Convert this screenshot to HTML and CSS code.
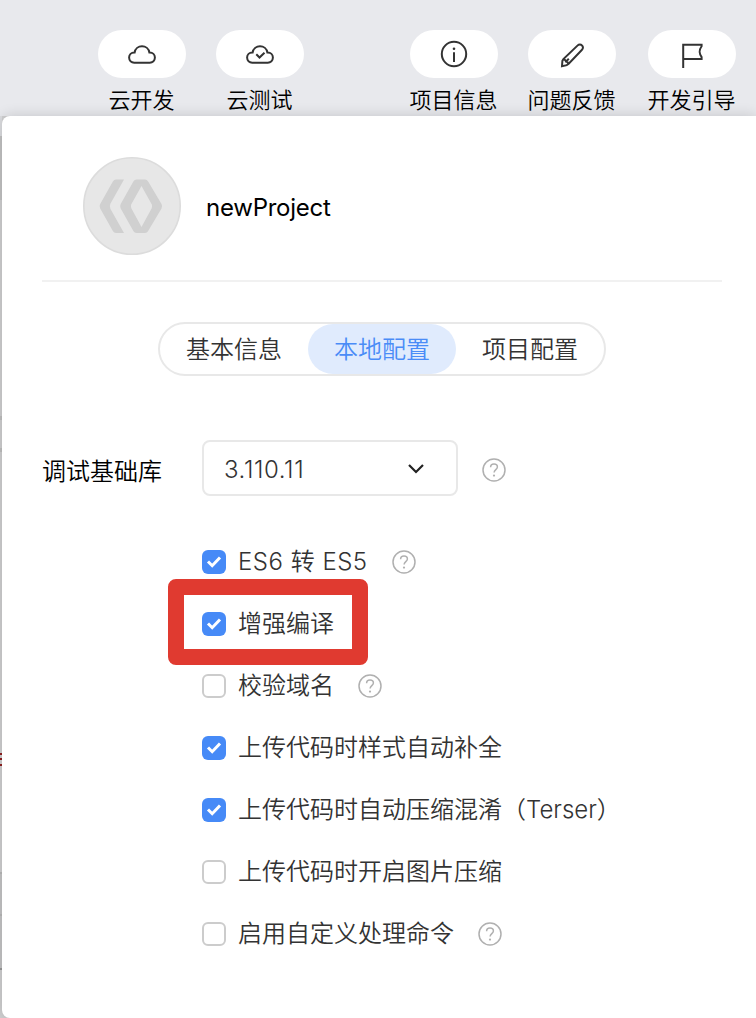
FILE: index.html
```html
<!DOCTYPE html>
<html lang="zh-CN">
<head>
<meta charset="utf-8">
<title>newProject</title>
<link rel="stylesheet" href="styles.css">
</head>
<body>
<svg class="defs" width="0" height="0">
  <symbol id="help" viewBox="0 0 24 24"><circle cx="12" cy="12" r="11" fill="none" stroke="#b0b0b0" stroke-width="1.5"/><path d="M8.600 9.200C8.600 7.200 10 6 12 6s3.400 1.200 3.400 3c0 2.600-3.300 2.800-3.300 5.600" fill="none" stroke="#b0b0b0" stroke-width="1.500"/><circle cx="12" cy="17.600" r="1.100" fill="#b0b0b0"/></symbol>
  <symbol id="tick" viewBox="0 0 24 24"><path d="M6 11.500l4.200 4.200L18 7.500" fill="none" stroke="#fff" stroke-width="3"/></symbol>
</svg>
<header class="toolbar">
  <div class="tool"><span class="pill"><svg width="32" height="32" viewBox="0 0 32 32"><path d="M8.200 24.700a5.100 5.100 0 0 1 0-10.200h.4a7.500 7.500 0 0 1 14.800 0h.4a5.100 5.100 0 0 1 0 10.200z"/></svg></span><span class="label">云开发</span></div>
  <div class="tool"><span class="pill"><svg width="32" height="32" viewBox="0 0 32 32"><path d="M8.200 24.700a5.100 5.100 0 0 1 0-10.200h.4a7.500 7.500 0 0 1 14.800 0h.4a5.100 5.100 0 0 1 0 10.200z"/><path d="M12.300 16.300l3.200 3.200 5-4.800"/></svg></span><span class="label">云测试</span></div>
  <div class="tool gap-wide"><span class="pill"><svg width="32" height="32" viewBox="0 0 32 32"><circle cx="16" cy="16" r="12.200"/><path d="M16 14.300V24"/><circle cx="16" cy="10.800" r="1.300" fill="#333" stroke="none"/></svg></span><span class="label">项目信息</span></div>
  <div class="tool"><span class="pill"><svg width="32" height="32" viewBox="0 0 32 32"><path d="M6 28.200l.4-5.400 1-1.700L21.700 7.400a3 3 0 0 1 4.300 0 3 3 0 0 1 0 4.400L12.700 25.700l-2 1.400z"/><path d="M7.300 21.500c1.700 0 2.400.6 2.700 2.100 1.500.2 2.200.8 2.400 2.300M10.200 23.400l2.600-2.600"/></svg></span><span class="label">问题反馈</span></div>
  <div class="tool gap-last"><span class="pill"><svg width="32" height="32" viewBox="0 0 32 32"><path d="M7.200 30V6.800H25.600v1.400c-2.800 4-2.800 6.600 0 10.800v1.900H7.200"/></svg></span><span class="label">开发引导</span></div>
</header>
<div class="body">
  <div class="backdrop"></div>
  <main class="panel">
    <section class="project">
      <svg class="avatar" width="98" height="98" viewBox="0 0 98 98"><circle cx="49" cy="49" r="48.200" fill="#e7e7e7" stroke="#dcdcdc" stroke-width="1.600"/><path d="M41 22.500H33q-2 0-3 1.700L17.200 47q-1.300 2.300 0 4.600L30 74.300q1 1.700 3 1.700h8L27.500 52q-1.500-2.700 0-5.400z" fill="#d0d0d0"/><path fill-rule="evenodd" d="M53.500 22.500H62q2 0 3 1.700L78.500 47q1.200 2.300 0 4.600L65 74.300q-1 1.700-3 1.700h-8.500q-2 0-3-1.700L37.700 51.600q-1.200-2.300 0-4.600l12.800-22.800q1-1.700 3-1.700zM58.500 29L48.300 47.200q-1 2 0 4L58.500 70 68.700 51.200q1-2 0-4z" fill="#d0d0d0"/></svg>
      <span class="name">newProject</span>
    </section>
    <nav class="tabs"><span class="tab">基本信息</span><span class="tab active">本地配置</span><span class="tab">项目配置</span></nav>
    <div class="library">
      <span class="library-label">调试基础库</span>
      <div class="select"><span class="version">3.110.11</span><svg width="18" height="12" viewBox="0 0 18 12"><path d="M2 2l7 7 7-7" fill="none" stroke="#222" stroke-width="2.200"/></svg></div>
      <svg class="help"><use href="#help"/></svg>
    </div>
    <div class="options">
      <div class="option"><span class="box on"><svg><use href="#tick"/></svg></span><span class="text es">ES6 转 ES5</span><svg class="help"><use href="#help"/></svg></div>
      <div class="option"><span class="box on"><svg><use href="#tick"/></svg></span><span class="text">增强编译</span><span class="highlight"></span></div>
      <div class="option"><span class="box"></span><span class="text">校验域名</span><svg class="help"><use href="#help"/></svg></div>
      <div class="option"><span class="box on"><svg><use href="#tick"/></svg></span><span class="text">上传代码时样式自动补全</span></div>
      <div class="option"><span class="box on"><svg><use href="#tick"/></svg></span><span class="text">上传代码时自动压缩混淆（<span class="terser">Terser</span>）</span></div>
      <div class="option"><span class="box"></span><span class="text">上传代码时开启图片压缩</span></div>
      <div class="option"><span class="box"></span><span class="text">启用自定义处理命令</span><svg class="help"><use href="#help"/></svg></div>
    </div>
  </main>
</div>
</body>
</html>
```
FILE: styles.css
```css
* { box-sizing: border-box; }
body { margin: 0; width: 756px; height: 1018px; overflow: hidden; background: #e8e9ed; font: 350 24px/32px Inter, "Noto Sans CJK SC", sans-serif; color: #333; white-space: nowrap; }
.defs { position: absolute; }
svg { display: block; flex: none; }
.toolbar { display: flex; height: 116px; padding: 30px 0 0 98px; gap: 30px; }
.tool { width: 88px; display: flex; flex-direction: column; align-items: center; color: #000; font-size: 22px; }
.tool svg { fill: none; stroke: #333; stroke-width: 2; }
.pill { width: 88px; height: 48px; border-radius: 24px; background: #fff; display: flex; align-items: center; justify-content: center; }
.label { margin: 6px 1px 0 0; }
.gap-wide { margin-left: 76px; }
.gap-last { margin-left: 2px; }
.body { display: flex; height: 902px; background: #d0d0d1; }
.backdrop { width: 2px; background: linear-gradient(#dcdde0 0 20px, #c3c3c4 20px 84px, #d0d0d1 84px 300px, #c0c0c0 300px 304px, #d0d0d1 304px 332px, #c0c0c0 332px 336px, #d0d0d1 336px 637px, #8f2020 637px 639px, #d0d0d1 639px 642px, #8f2020 642px 644px, #d0d0d1 644px 648px, #8f2020 648px 650px, #d0d0d1 650px 756px, #b9b9b9 756px 758px, #c5c5c6 758px 798px, #b9b9b9 798px 800px, #c5c5c6 800px 852px, #9a9a9a 852px 854px, #d0d0d1 854px); }
.panel { flex: 1; background: #fff; border-radius: 8px 0 0 8px; box-shadow: 0 0 14px rgba(0, 0, 0, .16); padding: 0 34px 0 40px; }
.project { height: 166px; border-bottom: 2px solid #f1f1f1; display: flex; padding: 41px 0 0 41px; }
.name { color: #000; margin: 35px 0 0 25px; font-weight: 400; letter-spacing: -.25px; }
.tabs { width: 448px; height: 54px; margin: 40px 0 0 116px; border: 2px solid #e8e8e8; border-radius: 27px; display: flex; }
.tab { width: 148px; height: 50px; line-height: 52px; text-align: center; border-radius: 25px; }
.active { color: #4a8cf7; background: #e0ebfd; }
.library { height: 56px; margin-top: 64px; display: flex; align-items: center; }
.library-label { width: 160px; color: #000; padding-top: 7px; }
.select { width: 256px; height: 56px; border: 2px solid #e8e8e8; border-radius: 8px; display: flex; align-items: center; justify-content: space-between; padding: 0 31px 0 20px; }
.version { padding-top: 4px; letter-spacing: .6px; }
.select svg { margin-top: 2px; }
.help { width: 24px; height: 24px; margin-left: 24px; }
.library .help { margin-top: 4px; }
.options { padding: 35px 0 0 160px; }
.option { height: 62px; display: flex; align-items: center; position: relative; }
.es { letter-spacing: .5px; }
.box { width: 24px; height: 24px; margin-right: 12px; border: 2px solid #ccc; border-radius: 6px; flex: none; }
.box.on { border: 0; background: #468af7; }
.box svg { width: 24px; height: 24px; }
.highlight { position: absolute; left: -34px; top: -14px; width: 200px; height: 86px; border: 16px solid #e03a30; border-radius: 8px; }
```
